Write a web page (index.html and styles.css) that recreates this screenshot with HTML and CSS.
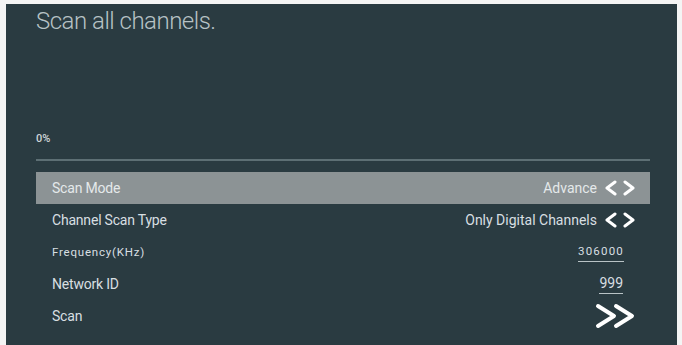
FILE: index.html
```html
<!DOCTYPE html>
<html lang="en">
<head>
    <meta charset="UTF-8">
    <title>Scan all channels</title>
    <link rel="stylesheet" href="styles.css">
</head>
<body>
    <div class="panel">
        <h1 class="title">Scan all channels.</h1>

        <div class="progress">
            <span class="percent">0%</span>
            <div class="progress-line"></div>
        </div>

        <ul class="menu">
            <li class="row active">
                <span class="label">Scan Mode</span>
                <span class="value">Advance
                    <svg class="lr" width="32" height="16" viewBox="0 0 32 16">
                        <path d="M11 2 L3 8 L11 14" />
                        <path d="M21 2 L29 8 L21 14" />
                    </svg>
                </span>
            </li>
            <li class="row">
                <span class="label">Channel Scan Type</span>
                <span class="value">Only Digital Channels
                    <svg class="lr" width="32" height="16" viewBox="0 0 32 16">
                        <path d="M11 2 L3 8 L11 14" />
                        <path d="M21 2 L29 8 L21 14" />
                    </svg>
                </span>
            </li>
            <li class="row">
                <span class="label small">Frequency(KHz)</span>
                <span class="value input small">306000</span>
            </li>
            <li class="row">
                <span class="label">Network ID</span>
                <span class="value input">999</span>
            </li>
            <li class="row">
                <span class="label">Scan</span>
                <span class="value">
                    <svg class="go" width="44" height="26" viewBox="0 0 44 26">
                        <path d="M4 3 L20 13 L4 23" />
                        <path d="M22 3 L38 13 L22 23" />
                    </svg>
                </span>
            </li>
        </ul>
    </div>
</body>
</html>
```

FILE: styles.css
```css
:root {
    --panel: #2a3b41;
    --text: #d8dfe1;
    --title: #b7c2c5;
    --bar: #8c9395;
    --line: #5d6f74;
}

* {
    margin: 0;
    padding: 0;
    box-sizing: border-box;
}

body {
    background: #f4f4f4;
    font-family: 'Roboto', 'Liberation Sans', sans-serif;
    overflow: hidden;
}

.panel {
    background: var(--panel);
    margin: 4px 5px 0 6px;
    height: 341px;
    padding: 2px 27px 0 30px;
    color: var(--text);
}

.title {
    font-size: 24px;
    font-weight: 300;
    color: var(--title);
    letter-spacing: -0.5px;
    line-height: 30px;
}

.progress {
    margin-top: 97px;
}

.percent {
    display: block;
    font-size: 11px;
    font-weight: 500;
    color: #cfd6d8;
    line-height: 12px;
}

.progress-line {
    height: 2px;
    background: var(--line);
    margin-top: 14px;
}

.menu {
    list-style: none;
    margin-top: 11px;
}

.row {
    height: 32px;
    display: flex;
    align-items: center;
    justify-content: space-between;
    padding: 0 14px 0 16px;
    font-size: 14px;
}

.row.active {
    background: var(--bar);
    color: #e4e9ea;
}

.label {
    letter-spacing: -0.2px;
}

.value {
    display: flex;
    align-items: center;
    gap: 7px;
    letter-spacing: 0;
}

.small {
    font-size: 11.5px;
    letter-spacing: 0.8px;
}

.value.input {
    margin-right: 13px;
    border-bottom: 1px solid #b9c3c6;
    padding: 2px 0 3px;
    line-height: 13px;
}

.value.input.small {
    letter-spacing: 1.2px;
    margin-right: 12px;
}

.lr path,
.go path {
    fill: none;
    stroke: #ffffff;
    stroke-linecap: round;
    stroke-linejoin: round;
}

.lr path {
    stroke-width: 3;
}

.go {
    margin-right: -2px;
}

.go path {
    stroke-width: 4;
}
```
